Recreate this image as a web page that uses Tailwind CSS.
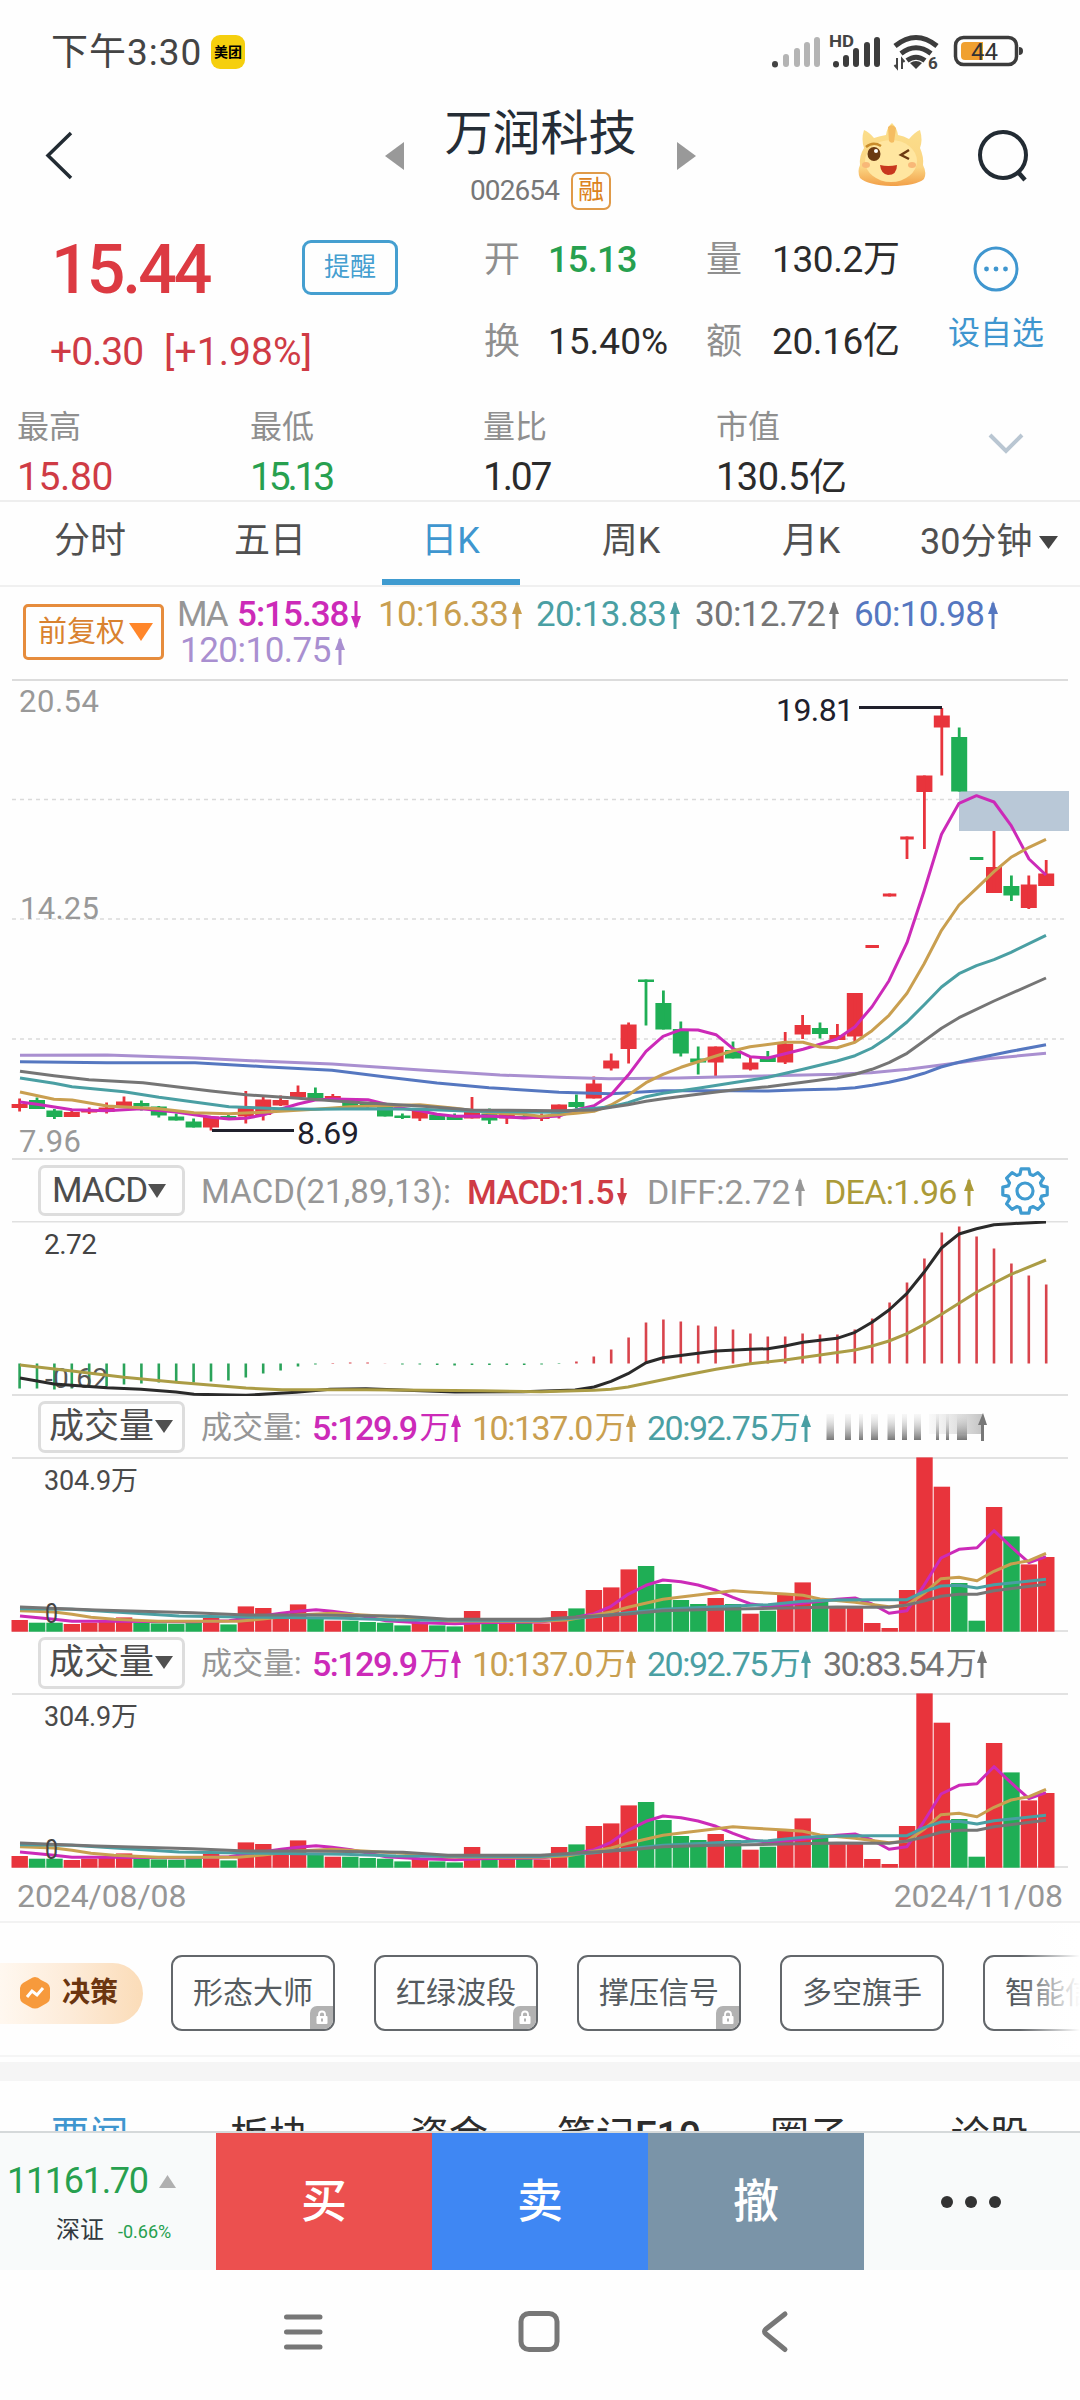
<!DOCTYPE html>
<html lang="zh-CN">
<head>
  <meta charset="UTF-8">
  <title>万润科技 002654</title>
  <script src="https://cdn.jsdelivr.net/npm/@tailwindcss/browser@4"></script>
  <style>
    body { font-family: Roboto, "Noto Sans CJK SC", sans-serif; }
    svg text { font-family: Roboto, "Noto Sans CJK SC", sans-serif; }
  </style>
</head>
<body class="bg-[#fefefe] w-[1080px] h-[2400px] overflow-hidden flex flex-col whitespace-nowrap">

  <!-- 状态栏 -->
  <div class="h-[104px] shrink-0 flex items-center pl-[51px] text-[#444]">
    <div class="text-[37px] leading-none w-[160px] tracking-[1px]">下午3:30</div>
    <div class="size-[34px] rounded-[9px] bg-[#f5cf0e] text-black text-[14px] font-bold flex items-center justify-center">美团</div>
    <svg class="ml-[525px]" width="260" height="44" viewBox="770 30 260 44">
      <g stroke="#b4b4b4" stroke-width="6" stroke-linecap="round">
        <path d="M775 64V64.500" stroke="#444"/>
        <path d="M786 57V64M797 51V64M807 45V64M817 40V64"/>
      </g>
      <path d="M836 64V64.500M846 58V64M856 51V64M867 45V64M877 40V64" stroke="#3c3c3c" stroke-width="6" stroke-linecap="round"/>
      <text x="829" y="47" font-size="16" font-weight="700" fill="#444" textLength="25" lengthAdjust="spacingAndGlyphs">HD</text>
      <g fill="none" stroke="#3c3c3c" stroke-width="5">
        <path d="M895 46Q916 29 937 46"/>
        <path d="M901 53.500Q916 42 931 53.500"/>
        <path d="M907 60.500Q916 54 925 60.500"/>
      </g>
      <path d="M910 63Q916 59 922 63L916 69Z" fill="#3c3c3c"/>
      <path d="M897 58V68L894.500 65M902 69V59L904.500 62" fill="none" stroke="#444" stroke-width="2"/>
      <text x="928" y="69" font-size="17" font-weight="700" fill="#444">6</text>
      <rect x="955.500" y="37.500" width="61" height="27" rx="8" fill="none" stroke="#3c3c3c" stroke-width="3.500"/>
      <path d="M1019 47Q1023 47 1023 51Q1023 55 1019 55Z" fill="#3c3c3c"/>
      <path d="M965 42H983V60H965Q961 60 961 56V46Q961 42 965 42Z" fill="#f0a030"/>
      <text x="971" y="59.500" font-size="24" fill="#333" textLength="27" lengthAdjust="spacingAndGlyphs">44</text>
    </svg>
  </div>

  <!-- 标题栏 -->
  <div class="h-[126px] shrink-0 flex">
    <svg class="ml-[40px] mt-[24px]" width="36" height="56" viewBox="40 128 36 56"><path d="M71 133L48 155.500L71 178" fill="none" stroke="#222b33" stroke-width="3.500"/></svg>
    <svg class="ml-[308px] mt-[38px]" width="21" height="28" viewBox="0 0 21 28"><path d="M1 14L20 0V28Z" fill="#999"/></svg>
    <div class="w-[271px] flex flex-col items-center">
      <div class="text-[48px] leading-[58px] text-[#252d36] mt-[1px]">万润科技</div>
      <div class="flex items-center gap-[12px] mt-[9px]">
        <div class="text-[28px] leading-[38px] text-[#777] tracking-[-0.9px]">002654</div>
        <div class="w-[40px] h-[38px] border-2 border-[#e09a48] rounded-[7px] text-[#dc8220] text-[26px] leading-[33px] text-center">融</div>
      </div>
    </div>
    <svg class="mt-[38px]" width="21" height="28" viewBox="0 0 21 28"><path d="M20 14L1 0V28Z" fill="#999"/></svg>
    <!-- 吉祥物 -->
    <svg class="ml-[157px] mt-[17px]" width="76" height="70" viewBox="856 122 76 70">
      <defs>
        <linearGradient id="fur" x1="0" y1="0" x2="0" y2="1"><stop offset="0" stop-color="#fbdf8c"/><stop offset="0.700" stop-color="#fbd583"/><stop offset="1" stop-color="#f2a048"/></linearGradient>
      </defs>
      <path d="M866 131Q871 133 876 139Q882 137 888 136Q889 128 894 124Q899 129 900 136Q906 137 911 140Q917 133 922 131Q925 141 922 149Q926 158 925 166Q929 174 926 180Q918 187 893 187Q870 186 862 179Q859 172 862 166Q861 157 866 149Q863 140 866 131Z" fill="url(#fur)"/>
      <ellipse cx="893" cy="162" rx="26" ry="21" fill="#ffe6a0"/>
      <path d="M890 128Q894 124 898 129L896 143Q893 145 891 142Z" fill="#f5bd62"/>
      <path d="M868 148Q875 142 883 147" fill="none" stroke="#c98c2b" stroke-width="2.500"/>
      <ellipse cx="876" cy="155" rx="6.500" ry="7" fill="#6b3a12"/>
      <circle cx="878" cy="152" r="2" fill="#fff"/>
      <path d="M911 151L903 156L911 160" fill="none" stroke="#6b3a12" stroke-width="2.500"/>
      <path d="M882 166Q890 168 899 166Q899 176 890 176Q883 175 882 166Z" fill="#c8371e"/>
      <ellipse cx="868" cy="166" rx="4" ry="3" fill="#f8b878"/>
      <ellipse cx="914" cy="166" rx="4" ry="3" fill="#f8b878"/>
    </svg>
    <svg class="ml-[46px] mt-[22px]" width="60" height="60" viewBox="976 126 60 60"><circle cx="1003" cy="155" r="23" fill="none" stroke="#222b33" stroke-width="4"/><path d="M1018 172L1025 180" stroke="#222b33" stroke-width="4.500"/></svg>
  </div>

  <!-- 行情 -->
  <div class="h-[170px] shrink-0 flex">
    <div class="w-[484px] pl-[50px]">
      <div class="flex items-start h-[84px]">
        <div class="w-[252px] pl-[1px] pt-[10px] text-[68px] leading-[60px] font-medium text-[#dc3a42] tracking-[-3px]">15.44</div>
        <div class="mt-[10px] w-[96px] h-[55px] border-[3px] border-[#459fd0] rounded-[9px] text-[#459fd0] text-[26px] leading-[48px] text-center">提醒</div>
      </div>
      <div class="mt-[19px] text-[39px] leading-[38px] text-[#cf3b45] tracking-[0.1px] flex"><span class="w-[114px] tracking-[-1px]">+0.30</span><span>[+1.98%]</span></div>
    </div>
    <div class="w-[422px] grid grid-cols-[64px_158px_66px_1fr] auto-rows-[82px] text-[36px] leading-[60px] text-[#2b2b2b]">
      <span class="text-[#8f8f8f]">开</span><span class="text-[#27a04f] font-medium tracking-[-0.6px]">15.13</span>
      <span class="text-[#8f8f8f]">量</span><span class="text-[37px] tracking-[-0.4px]">130.2万</span>
      <span class="text-[#8f8f8f]">换</span><span class="text-[37px] tracking-[0px]">15.40%</span>
      <span class="text-[#8f8f8f]">额</span><span class="text-[37px] tracking-[-0.4px]">20.16亿</span>
    </div>
    <div class="w-[174px] pl-[6px] flex flex-col items-center text-[#3f96cf] text-[32px] leading-[40px]">
      <svg class="mt-[15px] mb-[20px] ml-[0px]" width="48" height="48" viewBox="0 0 48 48"><circle cx="24" cy="24" r="21" fill="none" stroke="#3f96cf" stroke-width="3"/><circle cx="14.500" cy="24" r="2.400" fill="#3f96cf"/><circle cx="24" cy="24" r="2.400" fill="#3f96cf"/><circle cx="33.500" cy="24" r="2.400" fill="#3f96cf"/></svg>
      设自选
    </div>
  </div>

  <div class="h-[102px] shrink-0 border-b-2 border-[#eee] flex pl-[17px]">
    <div class="w-[233px]"><div class="text-[32px] leading-[54px] text-[#8f8f8f]">最高</div><div class="text-[39px] leading-[46px] text-[#cf3b45] tracking-[-0.4px]">15.80</div></div>
    <div class="w-[233px]"><div class="text-[32px] leading-[54px] text-[#8f8f8f]">最低</div><div class="text-[39px] leading-[46px] text-[#27a04f] tracking-[-3.200px]">15.13</div></div>
    <div class="w-[233px]"><div class="text-[32px] leading-[54px] text-[#8f8f8f]">量比</div><div class="text-[39px] leading-[46px] text-[#2b2b2b] tracking-[-2.200px]">1.07</div></div>
    <div class="w-[272px]"><div class="text-[32px] leading-[54px] text-[#8f8f8f]">市值</div><div class="text-[38px] leading-[46px] text-[#2b2b2b] tracking-[-0.5px]">130.5亿</div></div>
    <svg class="mt-[32px]" width="36" height="24" viewBox="0 0 36 24"><path d="M2 3L18 19L34 3" fill="none" stroke="#b9c6d2" stroke-width="4"/></svg>
  </div>

  <!-- 周期 -->
  <div class="h-[85px] shrink-0 border-b-2 border-[#f0f0f0] flex text-[36px] leading-[78px] text-[#505050] text-center">
    <div class="w-[180px]">分时</div>
    <div class="w-[180px]">五日</div>
    <div class="w-[181px] text-[#3f96cf] flex flex-col items-center">日K<div class="w-[138px] h-[6px] -mt-px ml-[1px] shrink-0 bg-[#3f9bd0]"></div></div>
    <div class="w-[180px]">周K</div>
    <div class="w-[180px]">月K</div>
    <div class="w-[179px] flex items-center pl-[19px] pb-[3px]">30分钟<svg class="ml-[7px]" width="19" height="15" viewBox="0 0 19 15"><path d="M0 1H19L9.500 14Z" fill="#444"/></svg></div>
  </div>

  <!-- 均线图例 -->
  <div class="h-[92px] shrink-0 flex pl-[23px]">
    <div class="mt-[17px] w-[141px] h-[56px] border-[3px] border-[#e68c3c] rounded-[5px] text-[#d9822f] text-[29px] leading-[48px] flex items-center pl-[12px]">前复权<svg class="ml-[4px]" width="24" height="18" viewBox="0 0 24 18"><path d="M0 0H24L12 18Z" fill="#ff862a"/></svg></div>
    <div class="ml-[13px] mt-[10px] text-[35px] leading-[36px] tracking-[-0.7px]" id="ma-legend">
      <div class="flex text-[#969696]"><span class="w-[60px] tracking-[-2px]">MA</span></div>
      <div class="text-[#a98fd0]"></div>
    </div>
  </div>

  <!-- K线主图 -->
  <svg class="shrink-0" width="1080" height="481" viewBox="0 679 1080 481" id="kline">
    <path d="M12 680H1068" stroke="#dcdcdc" stroke-width="2"/>
    <path d="M12 799.500H1068M12 919H1068M12 1039H1068" stroke="#dadada" stroke-width="1.500" stroke-dasharray="4 4"/>
    <path d="M12 1159H1068" stroke="#e0e0e0" stroke-width="2"/>
    <rect x="959" y="791" width="110" height="40" fill="#b9c8d7"/>
    <g id="candles"></g>
    <g id="ma-lines" fill="none" stroke-width="3" stroke-linejoin="round"></g>
    <g font-size="31" fill="#999">
      <text x="19" y="712" textLength="80">20.54</text>
      <text x="20" y="919" textLength="79">14.25</text>
      <text x="19" y="1151.500" textLength="62">7.96</text>
    </g>
    <path d="M859 707.500H942M212 1130.500H294" stroke="#20202c" stroke-width="3"/>
    <g font-size="32" fill="#20202c">
      <text x="776" y="721" textLength="78">19.81</text>
      <text x="297" y="1144" textLength="62">8.69</text>
    </g>
  </svg>

  <!-- MACD -->
  <div class="h-[61px] shrink-0 flex items-center pl-[38px] text-[34px] leading-[50px] text-[#969696]" id="macd-legend">
    <div class="w-[147px] h-[51px] border-[3px] border-[#ddd] rounded-[7px] flex items-center pl-[11px] text-[#4d4d4d] text-[35px] tracking-[-1px]">MACD<svg class="ml-[1px]" width="18" height="14" viewBox="0 0 18 14"><path d="M0 0H18L9 14Z" fill="#505050"/></svg></div>
    <span class="ml-[16px] w-[266px] pt-[3px] text-[33px] tracking-[0.1px]">MACD(21,89,13):</span>
    <span class="w-[180px] pt-[3px] text-[#cf3b45] font-medium tracking-[-0.9px] flex items-center gap-[3px]">MACD:1.5<svg width="10" height="28" viewBox="0 0 10 28"><path d="M5 0V26" stroke="currentColor" stroke-width="3"/><path d="M0 15H10L5 28Z" fill="currentColor"/></svg></span>
    <span class="w-[177px] pt-[3px] tracking-[0px] flex items-center gap-[4px]">DIFF:2.72<svg width="10" height="28" viewBox="0 0 10 28"><path d="M5 2V28" stroke="currentColor" stroke-width="3"/><path d="M0 13H10L5 0Z" fill="currentColor"/></svg></span>
    <span class="w-[176px] pt-[3px] text-[#ab9a38] tracking-[-0.7px] flex items-center gap-[7px]">DEA:1.96<svg width="10" height="28" viewBox="0 0 10 28"><path d="M5 2V28" stroke="currentColor" stroke-width="3"/><path d="M0 13H10L5 0Z" fill="currentColor"/></svg></span>
    <svg width="50" height="50" viewBox="-25 -25 50 50" fill="none" stroke="#3f9bd0" stroke-width="3.200" stroke-linejoin="round"><path id="gear"/><circle r="8"/></svg>
  </div>
  <svg class="shrink-0" width="1080" height="175" viewBox="0 1221 1080 175">
    <path d="M12 1221.500H1068M12 1395H1068" stroke="#e0e0e0" stroke-width="2"/>
    <text x="44" y="1254" font-size="28" fill="#444" textLength="53">2.72</text>
    <g id="macd-bars" stroke-width="2.600"></g>
    <text x="45" y="1388" font-size="28" fill="#555" textLength="63">-0.62</text>
    <g id="macd-lines" fill="none" stroke-width="3" stroke-linejoin="round"></g>
  </svg>

  <!-- 成交量 -->
  <div id="volumes" class="shrink-0"></div>

  <div class="h-[55px] shrink-0 border-b-2 border-[#f2f2f2] flex justify-between pl-[17px] pr-[17px] text-[32px] leading-[57px] text-[#969696] tracking-[-0.1px]">
    <span>2024/08/08</span><span>2024/11/08</span>
  </div>

  <!-- 决策 -->
  <div class="h-[134px] shrink-0 flex items-center pt-[8px] border-b-2 border-[#f5f5f5] overflow-hidden relative">
    <div class="w-[143px] h-[61px] shrink-0 rounded-r-full bg-linear-to-r from-[#fff8f0] via-[#fdebd8] to-[#fbdcb8] flex items-center pl-[20px] text-[28px] font-bold text-[#6b3510]">
      <svg class="mr-[12px]" width="30" height="32" viewBox="0 0 30 32"><path d="M15 0Q18 0 21 3L27 6Q30 8 30 11V21Q30 24 27 26L20 30Q15 33 10 30L3 26Q0 24 0 21V11Q0 8 3 6L10 2Q13 0 15 0Z" fill="#f79a3c"/><path d="M7 20L12 14L17 18L23 11" fill="none" stroke="#fff" stroke-width="3"/></svg>决策
    </div>
    <div id="chips" class="ml-[28px] flex gap-[39px] text-[30px] leading-[71px] text-[#555b60]"></div>
    <div class="absolute right-0 top-0 w-[60px] h-[130px] bg-linear-to-r from-white/0 to-white"></div>
  </div>
  <div class="h-[5px] shrink-0"></div>
  <div class="h-[19px] shrink-0 bg-[#f5f5f5]"></div>
  <div class="h-[50px] shrink-0 overflow-hidden flex text-[39px] leading-[111px] text-[#2d2d2d] text-center">
    <span class="w-[179px] text-[#3f96cf]">要闻</span>
    <span class="w-[180px]">板块</span>
    <span class="w-[180px]">资金</span>
    <span class="w-[180px]">笔记<span class="font-medium">F10</span></span>
    <span class="w-[180px]">圈子</span>
    <span class="w-[181px]">诊股</span>
  </div>

  <!-- 底部交易栏 -->
  <div class="h-[139px] shrink-0 border-t-2 border-[#d5d9da] bg-[#f8fafa] flex text-[46px] leading-[136px] text-white text-center font-medium">
    <div class="w-[216px] text-left font-normal">
      <div class="h-[72px] pt-[24px] pl-[7px] flex items-center text-[36px] leading-[48px] text-[#27a04f] tracking-[-1.3px]">11161.70<svg class="ml-[11px]" width="17" height="13" viewBox="0 0 17 13"><path d="M8.500 0L17 13H0Z" fill="#b0b0b0"/></svg></div>
      <div class="pl-[56px] pt-[6px] flex items-center leading-[32px]"><span class="text-[24px] text-[#333a40] w-[62px]">深证</span><span class="text-[18px] text-[#27a04f] pt-[5px]">-0.66%</span></div>
    </div>
    <div class="w-[216px] bg-[#ec504f]">买</div>
    <div class="w-[216px] bg-[#3f87f3]">卖</div>
    <div class="w-[216px] bg-[#7a94a8]">撤</div>
    <div class="w-[214px] flex items-center justify-center gap-[12px]">
      <i class="size-[12px] rounded-full bg-[#333]"></i><i class="size-[12px] rounded-full bg-[#333]"></i><i class="size-[12px] rounded-full bg-[#333]"></i>
    </div>
  </div>

  <!-- 系统导航 -->
  <svg class="shrink-0" width="1080" height="129" viewBox="0 2270 1080 129" fill="none" stroke="#777" stroke-width="5" stroke-linecap="round" stroke-linejoin="round">
    <path d="M286.500 2317H320M286.500 2332H320M286.500 2347H320"/>
    <rect x="521" y="2313.500" width="36" height="36" rx="8"/>
    <path d="M785 2314L766 2329Q763 2331.500 766 2334L785 2349.500"/>
  </svg>

  <script>
    const RED = '#e8343c', GREEN = '#1fae55';
    const COLORS = { m5: '#cc2ab8', m10: '#c99f50', m20: '#4a9fa3', m30: '#757575', m60: '#5577c0', m120: '#a98fd0' };
    const xAt = i => 19.6 + i * 17.4;
    const $ = id => document.getElementById(id);

    // [涨跌, 实体上, 实体下, 最高, 最低]
    const candles = [
      ['r',1104,1108,1098.500,1111.500],['g',1100,1109,1097.500,1109],['g',1110.500,1117,1109,1119],['r',1112,1117,1110,1117],
      ['r',1109.500,1112.500,1107.500,1114],['r',1107.500,1112,1102.500,1113.500],['r',1101.500,1106,1096.500,1106],['g',1103,1106.500,1100.500,1110.500],
      ['g',1106.500,1115.500,1106,1117.500],['g',1116.500,1120.500,1113.500,1120.500],['g',1121.500,1127.500,1118.500,1127.500],['r',1116.500,1127.500,1116.500,1130.500],
      ['g',1116,1119,1114,1120],['r',1107.500,1116.500,1091,1123.500],['r',1099.500,1115,1096.500,1120.500],['r',1100,1105.500,1095.500,1106],
      ['r',1092,1097.500,1085.500,1097.500],['g',1093,1098.500,1087.500,1100.500],['r',1096,1100.500,1094,1100.500],['g',1100,1106.500,1100,1106.500],
      ['g',1104,1106.500,1104,1108.500],['g',1106,1116.500,1106,1116.500],['g',1115.500,1118,1113.500,1119],['r',1110.500,1118.500,1110.500,1121],
      ['g',1114.500,1120,1114.500,1120],['g',1116,1120,1113.500,1120],['r',1110,1118.500,1097,1118.500],['g',1113.500,1120.500,1108.500,1124],
      ['r',1113.500,1118.500,1113.500,1124],['g',1116,1118.500,1112,1118.500],['r',1115.500,1119,1113.500,1121],['r',1104.500,1113.500,1104.500,1118.500],
      ['g',1102,1107,1094.500,1108.500],['r',1083.500,1098.500,1076.500,1098.500],['r',1060.500,1068.500,1053.500,1070.500],['r',1024.500,1049,1022.500,1063.500],
      ['g',979.500,982,979.500,1025.500],['g',1003,1029.500,990.500,1029.500],['g',1029,1053.500,1021.500,1056.500],['g',1058.500,1062.500,1046.500,1074.500],
      ['r',1046.500,1062.500,1046.500,1076],['g',1050,1058.500,1041.500,1058.500],['r',1062.500,1069.500,1056.500,1070.500],['g',1056.500,1062,1051,1062],
      ['r',1044,1062.500,1032,1064],['r',1025,1034.500,1015,1039],['g',1028,1034,1022.500,1038.500],['r',1035,1040,1024,1040],
      ['r',993,1036.500,993,1042],['r',945,948,945,948],['r',893.500,896.500,893.500,896.500],['r',836.500,839.500,836.500,859],
      ['r',775.500,792,775.500,849],['r',715.500,727.500,708,775.500],['g',737,791.500,727.500,791.500],['g',857,860,857,860],
      ['r',867,893,831,893],['g',886,895.500,875.500,901],['r',884.500,908,875.500,909],['r',873.500,886,860,886]
    ];

    const ma = {
      m120: '20,1055.300 107,1055 195,1058 264,1061.300 332,1064 421,1070 500,1075 559,1077.300 609,1078.700 678,1078 747,1076.300 836,1074.300 871,1072.700 908,1069.300 943,1064.700 988,1058.700 1046,1053.300',
      m60: '20,1061.700 107,1062.700 195,1062.700 264,1066.700 332,1070.300 386,1077 437,1083 489,1087.700 559,1092.300 576,1092.700 611,1093.700 663,1090.700 733,1090.700 768,1091 803,1089.700 837,1089 855,1087.700 872,1085.300 889,1082.300 907,1078.300 924,1073.300 941,1067 959,1062.300 977,1058.300 1011,1051.300 1046,1044.700',
      m5: '20,1102 37,1104.300 72,1109.700 107,1110.700 141,1108.700 176,1112 211,1117.300 229,1119 246,1118.300 263,1115 281,1109 298,1104 315,1100 333,1099 368,1099.700 385,1104 402,1108.300 420,1110.700 437,1114.300 455,1116.300 489,1116 524,1118 559,1116 576,1110 594,1105.700 611,1094.700 628,1075.300 646,1051.300 663,1036.300 681,1029.700 698,1030 716,1034.700 733,1048.700 750,1056.700 768,1058 785,1053.700 803,1049.300 820,1044.300 837,1039 855,1026.700 872,1006.700 889,980.700 907,942.700 924,891.300 941.500,834.300 959,803.300 976.500,795.700 994,802 1011,825.300 1029,859 1046,875',
      m10: '20,1092 54,1099.300 72,1100 107,1106 159,1108.700 194,1112.700 229,1113.700 263,1112.300 315,1109.300 350,1106.700 420,1104.700 455,1108.300 489,1112.700 524,1114.300 540,1116.300 576,1113.300 594,1111.300 611,1105 628,1095.300 646,1082.700 663,1074.300 681,1067.300 716,1056 733,1050.700 750,1046.700 785,1042.300 803,1042.300 820,1047 837,1047.700 855,1042.300 872,1030.700 889,1015.300 907,993.300 924,964 941.500,930.300 959,905 976.500,888.300 994,871.700 1011,857.300 1029,847.300 1046,839.300',
      m20: '20,1078 54,1083.300 72,1086.700 124,1091.700 159,1097.300 194,1102 229,1106.700 281,1108.700 315,1109.300 368,1108.700 420,1109.300 472,1111.300 559,1112.300 576,1110 611,1106.700 628,1102.700 646,1096.700 663,1093.300 698,1088.300 733,1082.700 768,1077.300 803,1069.300 837,1061 855,1055.700 872,1048 889,1036.700 907,1022 924,1005 941.500,987 959,973.700 976.500,965.700 994,959.700 1011,952.300 1046,935.300',
      m30: '20,1071.300 54,1075.700 89,1079.700 143,1082.700 211,1091 246,1094.700 298,1098.300 350,1102 420,1106 472,1110 559,1110.700 594,1110 611,1107.300 628,1104.700 646,1101.300 663,1098.700 698,1094.300 733,1090 768,1086.700 803,1082.300 837,1077.700 855,1074.300 872,1069.300 889,1062.700 907,1053.300 924,1041 941.500,1028.300 959,1017.700 994,1001 1046,978'
    };

    const macdBars = [-25,-25,-26,-25,-24,-23,-21,-20,-19,-18.500,-19,-18,-17,-14,-10,-7,-3,-1,0.500,1,1,0.200,-1,-1,-1.500,-2,-1.500,-1.500,-1.500,-1.500,-1,-0.500,2,7,14,26,41,44,42,38,37,34,30,27,27,30,29,29,34,45,61,81,105,131,137,127,115,100,88,79];
    const diff = '20,1378 54,1384 107,1387.700 141,1389.300 176,1392 194,1394.300 246,1395.300 296,1392.300 330,1389.300 366,1388.700 455,1392 523,1391.700 575,1390 594,1387 611,1381.300 628,1373.700 646,1362.700 663,1357.700 698,1353.300 716,1351 750,1349.300 768,1348.700 785,1346 803,1342.300 837,1338.300 855,1332.300 872,1322.300 889,1310 907,1293.300 924,1272.300 941.500,1248 959,1234 976.500,1228.700 994,1224.700 1011,1223.700 1046,1222';
    const dea = '20,1365 72,1371 124,1377.300 176,1382.300 246,1388 282,1389.700 366,1389.700 482,1390.700 541,1391.700 594,1390.300 611,1389.300 628,1387 646,1383.300 681,1376 716,1369.300 750,1363.700 785,1360 820,1355 855,1350 872,1346 889,1341 907,1333.700 924,1324.700 941.500,1314.300 959,1303.300 976.500,1292.300 994,1283 1011,1274.300 1046,1260';

    const vols = [11.700,9,9,7.700,9,10,14.300,9,8.300,8,8.700,13.700,7.300,25.300,23.700,17,27.300,13,11,11,9.700,9,6.300,9,6.300,5.300,20.700,8.300,8.700,8.700,8.300,20.700,23.300,41.700,44.300,62.300,65.700,47.700,31.700,27.700,33.700,27.700,18,21,38.700,49.300,31.700,25,24.300,8.700,3.700,41.700,174.300,145,48.700,11,124.700,95.300,67.300,74.700];
    const volMa = {
      m5: '20,1616 54,1619.300 72,1621.300 107,1621.300 193,1621.700 229,1620.700 246,1618 263,1615.700 281,1613.300 298,1611.300 316,1609.700 332,1611.300 351,1613.700 386,1620.700 420,1622.700 455,1623.700 480,1622.700 540,1622 559,1620 576,1617.300 594,1613.700 611,1606.300 628,1594.300 646,1585.300 663,1580 681,1581.700 698,1585 716,1590.300 733,1597.300 750,1603.700 768,1606.300 803,1603.300 837,1599.300 855,1598 872,1604 889,1613.300 907,1610.700 924,1585.300 941,1558 959,1549.300 977,1547.700 994,1530.700 1011,1546.700 1029,1562.700 1046,1556.700',
      m10: '20,1610.700 54,1612 72,1614.300 91,1617.300 114,1619.300 158,1621.300 238,1621.300 263,1619 298,1615 332,1613.300 403,1617.300 448,1621 540,1621.300 567,1620 594,1615.300 611,1612 628,1607.300 663,1599.300 681,1597 733,1590.700 750,1592 785,1594 803,1595.300 820,1599 855,1602.300 889,1606.700 907,1605.300 924,1593.300 941,1578.700 959,1577.300 977,1580.700 994,1571.300 1011,1564 1029,1560.700 1046,1553.300',
      m20: '20,1608.700 72,1609.300 127,1612.700 179,1616 263,1617.300 344,1618.300 396,1620 540,1620.500 594,1616.700 628,1612.700 663,1609.300 716,1606.700 768,1604.700 803,1601.300 837,1600 872,1599.700 907,1599.700 924,1591.700 941,1586 959,1585.300 977,1588 994,1584.700 1046,1579.300',
      m30: '20,1607 96,1610 193,1612.700 246,1615 310,1615 403,1616.300 448,1619.300 540,1619.300 594,1616 628,1614 663,1610.700 716,1609.300 785,1608 837,1607 889,1607.300 907,1605 924,1601 941,1596.300 959,1594.300 977,1594.300 994,1590.700 1046,1584.300'
    };

    const poly = (pts, color) => `<polyline points="${pts}" stroke="${color}"/>`;
    const upArrow = '<svg width="10" height="28" viewBox="0 0 10 28"><path d="M5 2V28" stroke="currentColor" stroke-width="3"/><path d="M0 13H10L5 0Z" fill="currentColor"/></svg>';
    const downArrow = '<svg width="10" height="28" viewBox="0 0 10 28"><path d="M5 0V26" stroke="currentColor" stroke-width="3"/><path d="M0 15H10L5 28Z" fill="currentColor"/></svg>';

    // 均线图例
    const [row1, row2] = $('ma-legend').children;
    row1.innerHTML += `
      <span class="w-[141px] flex items-center gap-[3px] text-[#cc2ab8] font-medium tracking-[-1px]">5:15.38${downArrow}</span>
      <span class="w-[158px] flex items-center gap-[4px] text-[#c99f50]">10:16.33${upArrow}</span>
      <span class="w-[159px] flex items-center gap-[4px] text-[#4a9fa3]">20:13.83${upArrow}</span>
      <span class="w-[159px] flex items-center gap-[4px] text-[#757575]">30:12.72${upArrow}</span>
      <span class="flex items-center gap-[4px] text-[#5577c0]">60:10.98${upArrow}</span>`;
    row2.innerHTML = `<span class="pl-[3px] flex items-center gap-[4px] tracking-[-0.5px]">120:10.75${upArrow}</span>`;

    // K线
    $('candles').innerHTML = candles.map(([c, top, bottom, high, low], i) => {
      const color = c === 'r' ? RED : GREEN;
      const w = i === 49 || i === 50 || i === 51 || i === 55 ? 13.500 : 16;
      return `<rect x="${xAt(i) - w / 2}" y="${top}" width="${w}" height="${bottom - top}" fill="${color}"/>
        <rect x="${xAt(i) - 1.4}" y="${high}" width="2.8" height="${low - high}" fill="${color}"/>`;
    }).join('');
    $('ma-lines').innerHTML = Object.keys(ma).map(k => poly(ma[k], COLORS[k])).join('');

    // MACD
    $('macd-bars').innerHTML = macdBars.map((h, i) =>
      `<path d="M${xAt(i)} 1363.500V${1363.5 - h}" stroke="${h > 0 ? '#d8444c' : '#2aa35a'}"/>`).join('');
    $('macd-lines').innerHTML = poly(diff, '#2a2a2a') + poly(dea, '#ab9c45');

    // 设置齿轮: 八个齿
    let gear = '';
    for (let t = 0; t < 8; t++) {
      [[-17, 17.5], [-10, 22.5], [10, 22.5], [17, 17.5]].forEach(([off, r]) => {
        const a = (t * 45 + off - 90) * Math.PI / 180;
        gear += `${gear ? 'L' : 'M'}${(r * Math.cos(a)).toFixed(1)} ${(r * Math.sin(a)).toFixed(1)}`;
      });
    }
    $('gear').setAttribute('d', gear + 'Z');

    // 成交量副图, 两个指标窗口内容相同
    const smear = [[827.5,7.5],[846,6],[860,4],[872,7],[888.5,7.5],[903,5],[915,7],[937,3],[947,3],[958,10]];
    const smearSvg = `<svg width="166" height="30" viewBox="824 1414 166 30">
      <defs><linearGradient id="fade" x1="0" y1="0" x2="0" y2="1"><stop offset="0" stop-color="#ddd" stop-opacity="0.200"/><stop offset="1" stop-color="#777"/></linearGradient>
      <linearGradient id="haze" x1="0" y1="0" x2="1" y2="0"><stop offset="0" stop-color="#ccc" stop-opacity="0.100"/><stop offset="1" stop-color="#aaa" stop-opacity="0.700"/></linearGradient></defs>
      <rect x="930" y="1416" width="54" height="20" fill="url(#haze)"/>
      ${smear.map(([x, w]) => `<rect x="${x}" y="1416" width="${w}" height="26" fill="url(#fade)"/>`).join('')}
      <path d="M983.500 1420V1443" stroke="#777" stroke-width="3"/><path d="M979 1427L984 1415L988 1427Z" fill="#777"/></svg>`;

    function volumePanel(last) {
      return `
      <div class="h-[61px] flex items-center pl-[38px] text-[34px] leading-[52px] tracking-[-1.5px] text-[#969696]">
        <div class="w-[147px] h-[52px] border-[3px] border-[#ddd] rounded-[7px] flex items-center pl-[8px] text-[35px] leading-[46px] tracking-normal text-[#4d4d4d]">成交量<svg class="ml-[1px]" width="18" height="13" viewBox="0 0 18 13"><path d="M0 0H18L9 13Z" fill="#505050"/></svg></div>
        <span class="ml-[16px] w-[111px] pt-[2px] text-[31px] tracking-normal">成交量:</span>
        <span class="w-[160px] pt-[2px] flex items-center gap-[2px] text-[#cc2ab8] font-medium">5:129.9<i class="not-italic font-normal text-[31px] pl-[1px]">万</i>${upArrow}</span>
        <span class="w-[175px] pt-[2px] flex items-center gap-[2px] text-[#c99f50]">10:137.0<i class="not-italic text-[31px] pl-[1px]">万</i>${upArrow}</span>
        <span class="w-[176px] pt-[2px] flex items-center gap-[2px] text-[#4a9fa3]">20:92.75<i class="not-italic text-[31px] pl-[1px]">万</i>${upArrow}</span>
        ${last}
      </div>
      <svg class="block" width="1080" height="175" viewBox="0 1457 1080 175">
        <path d="M12 1458H1068M12 1631H1068" stroke="#e2e2e2" stroke-width="2"/>
        <text x="44" y="1490" font-size="27" fill="#4a4a4a" textLength="94">304.9万</text>
        ${vols.map((h, i) => `<rect x="${xAt(i) - 8.1}" y="${1631.7 - h}" width="16.400" height="${h}" fill="${candles[i][0] === 'r' ? RED : GREEN}"/>`).join('')}
        <g fill="none" stroke-width="3" stroke-linejoin="round">${Object.keys(volMa).map(k => poly(volMa[k], COLORS[k])).join('')}</g>
        <text x="45" y="1623" font-size="27" fill="#444" textLength="13" lengthAdjust="spacingAndGlyphs">0</text>
      </svg>`;
    }
    $('volumes').innerHTML = volumePanel(smearSvg) +
      volumePanel(`<span class="pt-[2px] flex items-center gap-[2px] text-[#757575]">30:83.54<i class="not-italic text-[31px] pl-[1px]">万</i>${upArrow}</span>`);

    // 决策按钮
    const lock = '<i class="absolute right-0 bottom-0 w-[23px] h-[23px] bg-[#b2b2b2] rounded-tl-[7px] rounded-br-[9px] flex items-center justify-center"><svg width="14" height="15" viewBox="0 0 14 15"><rect x="1.500" y="6" width="11" height="8" rx="1" fill="#fff"/><path d="M4 7V4.500Q4 1.500 7 1.500Q10 1.500 10 4.500V7" fill="none" stroke="#fff" stroke-width="1.800"/><path d="M7 8.500V11.500" stroke="#999" stroke-width="1.500"/></svg></i>';
    $('chips').innerHTML = [['形态大师', 1], ['红绿波段', 1], ['撑压信号', 1], ['多空旗手', 0], ['智能信号', 0]].map(([name, locked]) =>
      `<div class="relative w-[164px] h-[76px] shrink-0 border-2 border-[#63676b] rounded-[11px] text-center">${name}${locked ? lock : ''}</div>`).join('');
  </script>

</body>
</html>
